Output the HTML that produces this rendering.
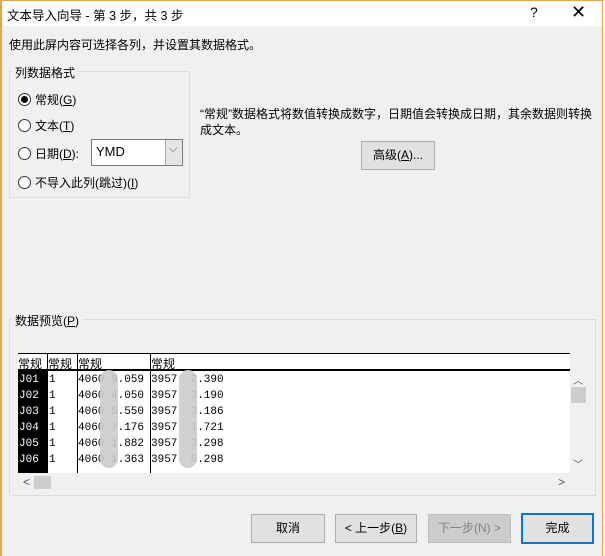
<!DOCTYPE html>
<html><head><meta charset="utf-8"><style>
*{margin:0;padding:0;box-sizing:border-box}
body{width:605px;height:556px;background:#fff;position:relative;overflow:hidden;font-family:"Liberation Sans","Noto Sans CJK SC",sans-serif;font-size:12px;color:#000}
.a{position:absolute;white-space:nowrap}
.win{position:absolute;left:0;top:0;width:603px;height:556px;background:#f0f0f0;border-left:2px solid #e8a54a;border-right:1px solid #e8a54a;border-top:1px solid #e8a54a}
.title{position:absolute;left:2px;top:1px;width:600px;height:25px;background:#fff}
.grp{position:absolute;border:1px solid #dcdcdc}
.lbl{position:absolute;background:#f0f0f0;padding:0 3px}
.rad{position:absolute;width:13px;height:13px;border:1px solid #333;border-radius:50%;background:#fff}
.btn{position:absolute;height:29px;background:#e1e1e1;border:1px solid #adadad;text-align:center;line-height:27px;font-size:12px}
.mono{font-family:"Liberation Mono","Noto Sans CJK SC",monospace;font-size:11px}
.blur{position:absolute;width:18px;background:#ccc;border-radius:9px;opacity:.9}
</style></head><body>
<div class="win"></div>
<div class="title"></div>
<div class="a" style="left:7px;top:5px;font-size:12.5px">文本导入向导 - 第 3 步，共 3 步</div>
<div class="a" style="left:530px;top:4px;font-size:14px">?</div>
<div class="a" style="left:571px;top:2px;font-size:18px">✕</div>
<div class="a" style="left:9px;top:36px">使用此屏内容可选择各列，并设置其数据格式。</div>

<div class="grp" style="left:9px;top:71px;width:181px;height:127px"></div>
<div class="lbl" style="left:12px;top:64px">列数据格式</div>
<div class="rad" style="left:18px;top:93px"></div><div class="a" style="left:21px;top:96px;width:7px;height:7px;border-radius:50%;background:#000"></div>
<div class="a" style="left:35px;top:91px">常规(<u>G</u>)</div>
<div class="rad" style="left:18px;top:119px"></div><div class="a" style="left:35px;top:117px">文本(<u>T</u>)</div>
<div class="rad" style="left:18px;top:147px"></div><div class="a" style="left:35px;top:145px">日期(<u>D</u>):</div>
<div class="a" style="left:91px;top:139px;width:92px;height:27px;background:#fff;border:1px solid #7a7a7a"></div>
<div class="a" style="left:165px;top:140px;width:17px;height:25px;background:#e5e5e5;border-left:1px solid #aaa"></div>
<div class="a" style="left:169px;top:143px;font-size:11px;color:#555">⌵</div>
<div class="a" style="left:96px;top:144px;font-size:13px">YMD</div>
<div class="rad" style="left:18px;top:176px"></div><div class="a" style="left:35px;top:174px">不导入此列(跳过)(<u>I</u>)</div>

<div class="a" style="left:200px;top:105px">“常规”数据格式将数值转换成数字，日期值会转换成日期，其余数据则转换</div>
<div class="a" style="left:200px;top:121px">成文本。</div>
<div class="btn" style="left:361px;top:141px;width:74px;height:29px">高级(<u>A</u>)...</div>

<div class="grp" style="left:9px;top:319px;width:587px;height:177px"></div>
<div class="lbl" style="left:12px;top:312px">数据预览(<u>P</u>)</div>

<div class="a" style="left:18px;top:353px;width:552px;height:120px;background:#fff;border-top:1px solid #000"></div>
<div class="a" style="left:18px;top:369px;width:552px;height:2px;background:#000"></div>
<div class="a" style="left:18px;top:371px;width:29px;height:102px;background:#000"></div>
<div class="a" style="left:47px;top:354px;width:1px;height:119px;background:#000"></div>
<div class="a" style="left:77px;top:354px;width:1px;height:119px;background:#000"></div>
<div class="a" style="left:150px;top:354px;width:1px;height:119px;background:#000"></div>
<div class="mono a" style="left:18px;top:355px;font-size:12px">常规</div>
<div class="mono a" style="left:48px;top:355px;font-size:12px">常规</div>
<div class="mono a" style="left:78px;top:355px;font-size:12px">常规</div>
<div class="mono a" style="left:151px;top:355px;font-size:12px">常规</div>
<div class="mono a" style="left:19px;top:372px;color:#fff;line-height:16px">J01<br>J02<br>J03<br>J04<br>J05<br>J06</div>
<div class="mono a" style="left:49px;top:372px;line-height:16px">1<br>1<br>1<br>1<br>1<br>1</div>
<div class="mono a" style="left:78px;top:372px;line-height:16px">4060 9.059<br>4060 4.050<br>4060 5.550<br>4060 7.176<br>4060 1.882<br>4060 1.363</div>
<div class="mono a" style="left:151px;top:372px;line-height:16px">3957&nbsp; 2.390<br>3957&nbsp; 3.190<br>3957&nbsp; 3.186<br>3957&nbsp; 1.721<br>3957&nbsp; 3.298<br>3957&nbsp; 5.298</div>
<div class="blur" style="left:100px;top:370px;height:98px"></div>
<div class="blur" style="left:179px;top:370px;height:98px"></div>

<div class="a" style="left:573px;top:372px;font-size:10px;color:#555">︿</div>
<div class="a" style="left:571px;top:387px;width:15px;height:16px;background:#cdcdcd"></div>
<div class="a" style="left:573px;top:456px;font-size:10px;color:#555">﹀</div>
<div class="a" style="left:23px;top:475px;font-size:12px;color:#555">&lt;</div>
<div class="a" style="left:34px;top:476px;width:17px;height:13px;background:#cdcdcd"></div>
<div class="a" style="left:558px;top:475px;font-size:12px;color:#555">&gt;</div>

<div class="btn" style="left:251px;top:514px;width:74px">取消</div>
<div class="btn" style="left:335px;top:514px;width:82px">&lt; 上一步(<u>B</u>)</div>
<div class="btn" style="left:428px;top:514px;width:83px;background:#ccc;border-color:#bfbfbf;color:#838383">下一步(N) &gt;</div>
<div class="btn" style="left:521px;top:513px;width:73px;height:31px;border:2px solid #0078d7;line-height:27px">完成</div>
</body></html>
